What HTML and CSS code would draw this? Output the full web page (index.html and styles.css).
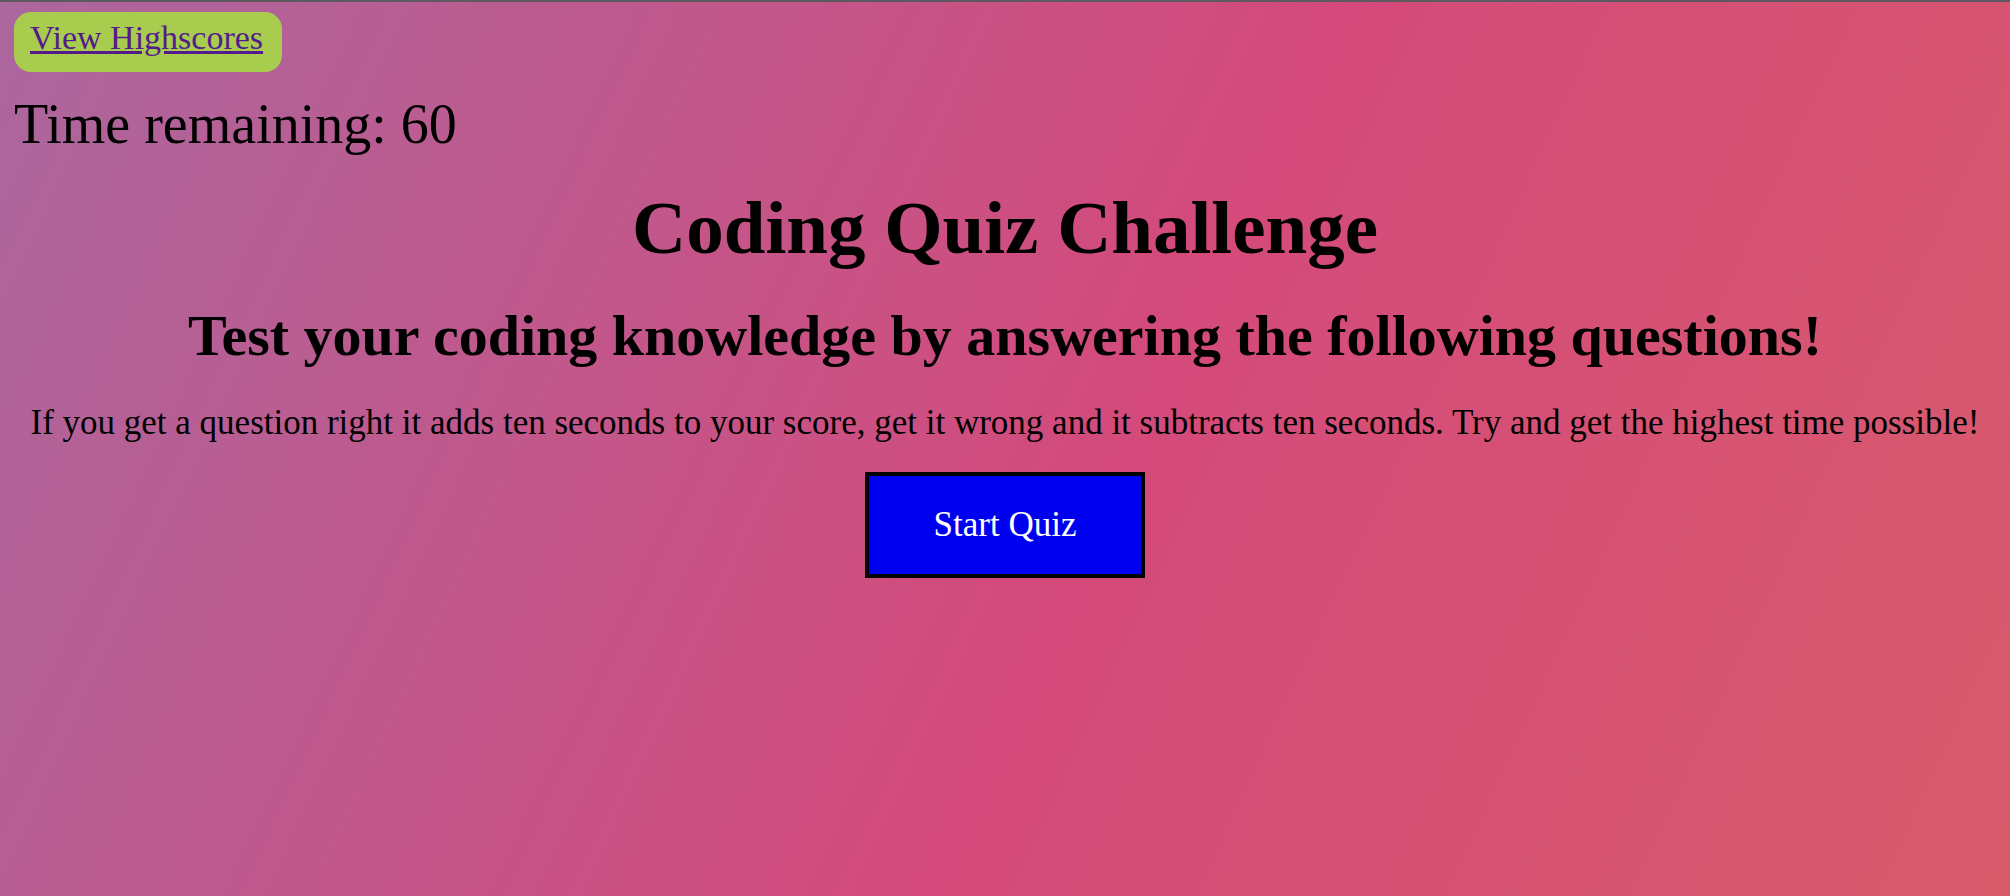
FILE: index.html
```html
<!DOCTYPE html>
<html lang="en">
<head>
<meta charset="utf-8">
<title>Coding Quiz Challenge</title>
<link rel="stylesheet" href="styles.css">
</head>
<body>
<div class="topbar"></div>
<header class="header">
  <a class="highscores" href="#">View Highscores</a>
  <div class="timer">Time remaining: 60</div>
</header>
<main class="intro">
  <h1 class="title">Coding Quiz Challenge</h1>
  <h2 class="subtitle">Test your coding knowledge by answering the following questions!</h2>
  <p class="rules">If you get a question right it adds ten seconds to your score, get it wrong and it subtracts ten seconds. Try and get the highest time possible!</p>
  <button class="start">Start Quiz</button>
</main>
</body>
</html>
```

FILE: styles.css
```css
html, body {
  margin: 0;
  padding: 0;
}
body {
  min-height: 100vh;
  font-family: "Liberation Serif", "DejaVu Serif", serif;
  color: #000;
  background: linear-gradient(115deg, #ab679e 0%, #d44a7b 55%, #d85b6b 100%);
}
.topbar {
  height: 2px;
  background: #5c5a60;
}
.header {
  display: flex;
  flex-direction: column;
  align-items: flex-start;
  padding: 10px 14px 0;
}
.highscores {
  display: block;
  background: #a8cd4e;
  color: #551a8b;
  border-radius: 17px;
  font-size: 34px;
  line-height: 52px;
  height: 60px;
  width: 268px;
  box-sizing: border-box;
  padding-left: 16px;
}
.timer {
  font-size: 56px;
  line-height: 60px;
  margin-top: 22px;
}
.intro {
  display: flex;
  flex-direction: column;
  align-items: center;
  text-align: center;
}
.title {
  margin: 34px 0 0;
  font-size: 75px;
  line-height: 80px;
}
.subtitle {
  margin: 33px 0 0;
  font-size: 58px;
  line-height: 70px;
}
.rules {
  margin: 30px 0 0;
  font-size: 35px;
  line-height: 44px;
}
.start {
  margin-top: 27px;
  width: 280px;
  height: 106px;
  background: #0000f0;
  color: #fff;
  border: 4px solid #000;
  font-family: "Liberation Serif", "DejaVu Serif", serif;
  font-size: 35px;
}
```
